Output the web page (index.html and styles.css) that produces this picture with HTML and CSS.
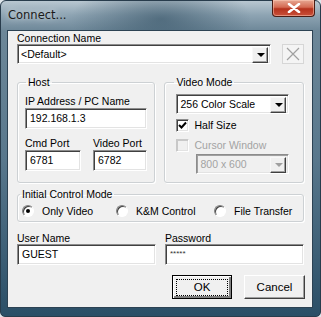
FILE: index.html
```html
<!DOCTYPE html>
<html lang="en">
<head>
    <meta charset="UTF-8">
    <title>Connect...</title>
    <link rel="stylesheet" href="styles.css">
</head>
<body>
    <div class="window">
        <div class="titlebar">
            <span class="title">Connect...</span>
            <div class="close-btn">
                <svg width="14" height="10" viewBox="0 0 14 10"><path d="M2 1 L12 9 M12 1 L2 9" stroke="#fff" stroke-width="2.6" stroke-linecap="round"/></svg>
            </div>
        </div>

        <div class="client">
            <div class="label">Connection Name</div>
            <div class="conn-row">
                <div class="combo conn-combo">
                    <span class="combo-text">&lt;Default&gt;</span>
                    <span class="combo-arrow"><i class="tri"></i></span>
                </div>
                <div class="del-btn">
                    <svg width="14" height="14" viewBox="0 0 14 14"><path d="M1 1 L13 13 M13 1 L1 13" stroke="#a0a0a0" stroke-width="1.2"/></svg>
                </div>
            </div>

            <div class="group-row">
                <fieldset class="group host">
                    <legend>Host</legend>
                    <div class="label">IP Address / PC Name</div>
                    <div class="input ip">192.168.1.3</div>
                    <div class="ports">
                        <div class="port cmd">
                            <div class="label">Cmd Port</div>
                            <div class="input">6781</div>
                        </div>
                        <div class="port video">
                            <div class="label">Video Port</div>
                            <div class="input">6782</div>
                        </div>
                    </div>
                </fieldset>

                <fieldset class="group video-mode">
                    <legend>Video Mode</legend>
                    <div class="combo mode-combo">
                        <span class="combo-text">256 Color Scale</span>
                        <span class="combo-arrow"><i class="tri"></i></span>
                    </div>
                    <div class="check-row">
                        <span class="checkbox checked">
                            <svg width="9" height="9" viewBox="0 0 9 9"><path d="M1 4 L3.5 6.5 L8 1.5" stroke="#000" stroke-width="2" fill="none"/></svg>
                        </span>
                        <span>Half Size</span>
                    </div>
                    <div class="check-row disabled">
                        <span class="checkbox"></span>
                        <span>Cursor Window</span>
                    </div>
                    <div class="combo size-combo disabled">
                        <span class="combo-text">800 x 600</span>
                        <span class="combo-arrow"><i class="tri"></i></span>
                    </div>
                </fieldset>
            </div>

            <fieldset class="group control-mode">
                <legend>Initial Control Mode</legend>
                <div class="radios">
                    <div class="radio-item r1"><span class="radio on"></span>Only Video</div>
                    <div class="radio-item r2"><span class="radio"></span>K&amp;M Control</div>
                    <div class="radio-item"><span class="radio"></span>File Transfer</div>
                </div>
            </fieldset>

            <div class="login-row">
                <div class="login-col">
                    <div class="label">User Name</div>
                    <div class="input">GUEST</div>
                </div>
                <div class="login-col">
                    <div class="label">Password</div>
                    <div class="input pass">*****</div>
                </div>
            </div>

            <div class="button-row">
                <div class="btn default"><span class="focus">OK</span></div>
                <div class="btn">Cancel</div>
            </div>
        </div>
    </div>
</body>
</html>
```

FILE: styles.css
```css
body {
    margin: 0;
    background: #dfe6eb;
    font-family: "Liberation Sans", Arial, sans-serif;
    font-size: 10.5px;
    color: #000;
}
.window {
    width: 321px;
    height: 317px;
    display: flex;
    flex-direction: column;
    box-sizing: border-box;
    border: 1px solid #283c4c;
    border-radius: 6px 6px 5px 5px;
    background:
        radial-gradient(ellipse 90px 40px at 160px 18px, rgba(40, 70, 90, 0.55), rgba(40, 70, 90, 0) 100%),
        linear-gradient(180deg, #b9c7d1 0px, #8ea4b3 14px, #6d8798 30px, #58778c 160px, #2a4e66 317px);
}
.titlebar {
    height: 29px;
    display: flex;
    justify-content: space-between;
    align-items: flex-start;
    padding-left: 7px;
}
.title {
    margin-top: 7px;
    font-family: "DejaVu Sans", sans-serif;
    font-size: 11.5px;
    color: #1a1a1a;
    text-shadow: 0 0 6px rgba(255, 255, 255, 0.9);
}
.close-btn {
    width: 43px;
    height: 17px;
    margin-right: 5px;
    margin-top: -1px;
    box-sizing: border-box;
    border: 1px solid #4a1c14;
    border-top: none;
    border-radius: 0 0 4px 4px;
    background: linear-gradient(180deg, #e7a893 0%, #d46a52 45%, #b5321c 55%, #c9503a 100%);
    box-shadow: inset 0 0 0 1px rgba(255, 210, 190, 0.5);
    display: flex;
    align-items: center;
    justify-content: center;
}
.client {
    flex: 1;
    margin: 0 7px 8px 6px;
    background: #f0f0f0;
    border: 1px solid #2c4253;
    padding: 1px 8px 0 9px;
}
.label {
    line-height: 12px;
    height: 12px;
    white-space: nowrap;
}

/* sunken edit fields */
.input, .combo {
    box-sizing: border-box;
    background: #fff;
    border: 1px solid;
    border-color: #8c8c8c #ffffff #ffffff #8c8c8c;
    box-shadow: inset 1px 1px 0 #404040, inset -1px -1px 0 #e3e3e3;
    height: 21px;
    line-height: 19px;
    padding-left: 4px;
    white-space: nowrap;
}
.combo {
    display: flex;
    justify-content: space-between;
    height: 20px;
    padding: 2px 2px 2px 3px;
    line-height: 15px;
}
.combo-arrow {
    width: 16px;
    height: 16px;
    box-sizing: border-box;
    background: #f0f0f0;
    border: 1px solid;
    border-color: #f8f8f8 #404040 #404040 #f8f8f8;
    box-shadow: inset -1px -1px 0 #a0a0a0;
    display: flex;
    align-items: center;
    justify-content: center;
}
.tri {
    width: 0;
    height: 0;
    border-left: 4px solid transparent;
    border-right: 4px solid transparent;
    border-top: 4px solid #000;
    margin-left: 1px;
}
.conn-row {
    display: flex;
    align-items: flex-start;
}
.conn-combo {
    width: 256px;
}
.del-btn {
    width: 22px;
    height: 20px;
    margin-left: 11px;
    box-sizing: border-box;
    border: 1px solid #d6d6d6;
    background: #f4f4f4;
    display: flex;
    align-items: center;
    justify-content: center;
}

/* group boxes */
.group {
    margin: 0;
    border: 1px solid #cdd1d4;
    border-radius: 3px;
    box-shadow: inset 1px 1px 0 #fff, 1px 1px 0 #fff;
    padding: 0 7px;
    min-width: 0;
}
.group legend {
    padding: 0 2px;
    line-height: 12px;
    font-size: 10.5px;
}
.group-row {
    display: flex;
    margin-top: 12px;
    gap: 9px;
}
.host {
    width: 140px;
    box-sizing: border-box;
    padding: 7px 7px 10px 7px;
}
.host legend {
    margin-left: 1px;
}
.ip {
    margin-top: 1px;
}
.ports {
    display: flex;
    gap: 12px;
    margin-top: 8px;
}
.port .input {
    margin-top: 1px;
}
.cmd {
    width: 56px;
}
.video {
    width: 54px;
}
.video-mode {
    width: 141px;
    box-sizing: border-box;
    padding: 6px 8px 8px 11px;
}
.video-mode legend {
    margin-left: -2px;
}
.mode-combo {
    width: 113px;
}
.check-row {
    display: flex;
    align-items: center;
    height: 16px;
    margin-top: 3px;
    gap: 5px;
}
.check-row + .check-row {
    margin-top: 4px;
}
.checkbox {
    width: 13px;
    height: 13px;
    box-sizing: border-box;
    background: #fff;
    border: 1px solid;
    border-color: #8c8c8c #ffffff #ffffff #8c8c8c;
    box-shadow: inset 1px 1px 0 #404040, inset -1px -1px 0 #e3e3e3;
    display: flex;
    align-items: center;
    justify-content: center;
}
.disabled {
    color: #a3a3a3;
}
.disabled .checkbox {
    background: #f0f0f0;
    box-shadow: inset 1px 1px 0 #c8c8c8, inset -1px -1px 0 #e3e3e3;
    border-color: #c8c8c8 #ffffff #ffffff #c8c8c8;
}
.size-combo {
    width: 93px;
    margin: 1px 0 0 20px;
    background: #f0f0f0;
    box-shadow: inset 1px 1px 0 #a0a0a0, inset -1px -1px 0 #e3e3e3;
}
.size-combo .tri {
    border-top-color: #a0a0a0;
}

.control-mode {
    margin-top: 5px;
    padding: 4px 4px 3px 4px;
}
.control-mode legend {
    margin-left: -2px;
}
.radios {
    display: flex;
    align-items: center;
    height: 14px;
}
.radio-item {
    display: flex;
    align-items: center;
    gap: 8px;
    white-space: nowrap;
}
.r1 {
    width: 94px;
}
.r2 {
    width: 98px;
}
.radio {
    width: 12px;
    height: 12px;
    box-sizing: border-box;
    border-radius: 50%;
    background: #fff;
    border: 1px solid;
    border-color: #808080 #ffffff #ffffff #808080;
    box-shadow: inset 1px 1px 0 #404040;
    position: relative;
}
.radio.on::after {
    content: "";
    position: absolute;
    left: 3px;
    top: 3px;
    width: 4px;
    height: 4px;
    border-radius: 50%;
    background: #000;
}

.login-row {
    display: flex;
    gap: 9px;
    margin-top: 10px;
}
.login-col {
    width: 139px;
}
.pass {
    font-size: 8px;
    line-height: 17px;
    color: #333;
}

.button-row {
    display: flex;
    justify-content: flex-end;
    gap: 12px;
    margin-top: 10px;
    margin-right: -1px;
}
.btn {
    width: 61px;
    height: 24px;
    box-sizing: border-box;
    background: #f0f0f0;
    border: 1px solid;
    border-color: #ffffff #404040 #404040 #ffffff;
    box-shadow: inset -1px -1px 0 #a0a0a0;
    display: flex;
    align-items: center;
    justify-content: center;
    font-size: 11.5px;
}
.btn.default {
    width: 60px;
    border: 1px solid #000;
    box-shadow: inset 1px 1px 0 #fff, inset -2px -2px 0 #808080;
}
.focus {
    width: 52px;
    height: 17px;
    line-height: 15px;
    text-align: center;
    box-sizing: border-box;
    border: 1px dotted #000;
}
```
